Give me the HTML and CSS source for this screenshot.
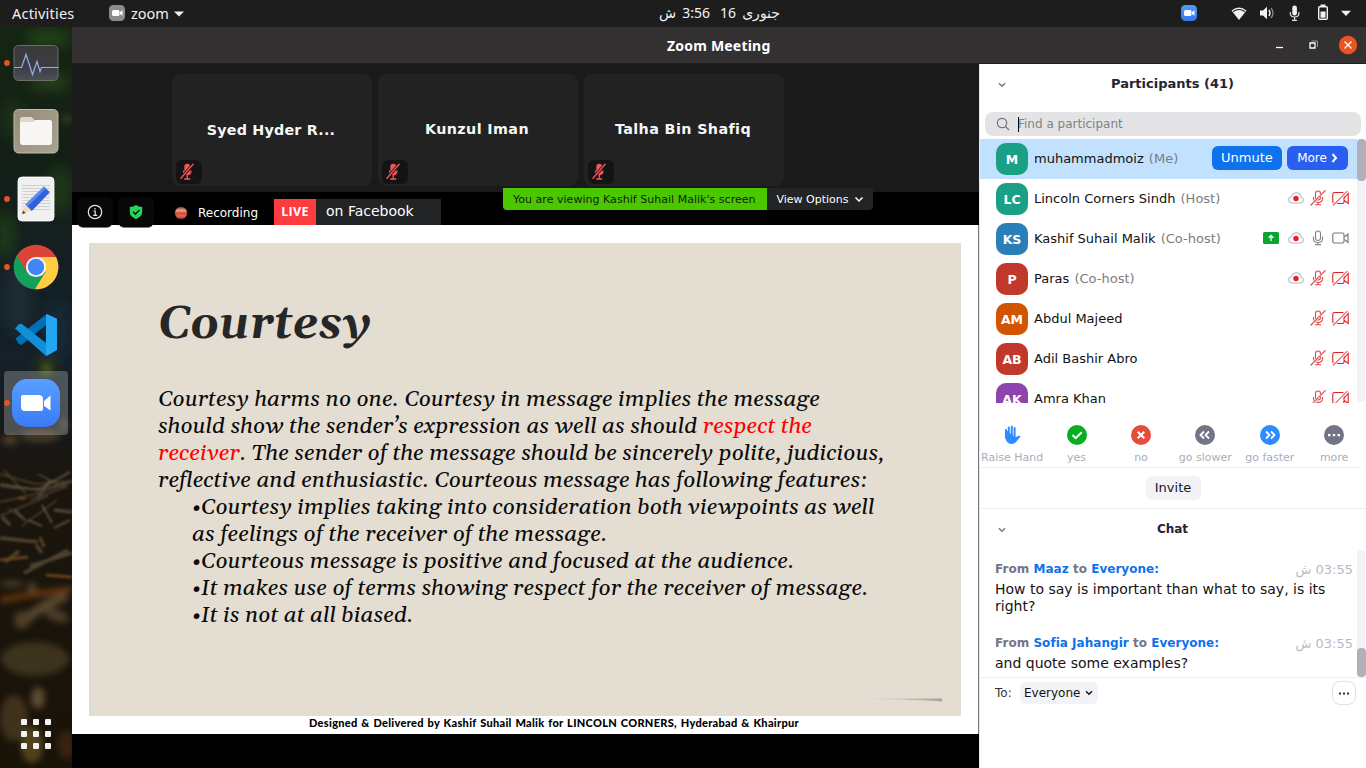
FILE: index.html
```html
<!DOCTYPE html>
<html lang="en">
<head>
<meta charset="utf-8">
<title>Zoom Meeting</title>
<link rel="stylesheet" href="styles.css">
</head>
<body>
<svg class="defs" width="0" height="0">
  <symbol id="mic-off" viewBox="0 0 16 16"><g fill="none" stroke="#e8474a" stroke-width="1.100"><rect x="5.500" y="1" width="5" height="9" rx="2.500"/><path d="M3.500 7v1.500c0 2.500 2 3.900 4.500 3.900s4.500-1.400 4.500-3.900V7M8 12.400v2.200M5 14.800h6"/><path d="M.5 15.500l15-15.200" stroke="#fff" stroke-width="1.800"/><path d="M.5 15.500l15-15.200"/></g></symbol>
  <symbol id="cam-off" viewBox="0 0 17 16"><g fill="none" stroke="#df2229" stroke-width="1.100"><path d="M9 13.500h1.500Q12 13.500 12 12V4Q12 2.500 10.500 2.500h-8Q.8 2.500.8 4v8q0 1.500 1.500 1.500M12.300 8l3.900-4.500v10l-3.900-3M4 13.500h6"/><path d="M1 15.500L15.500.8" stroke="#fff" stroke-width="3"/><path d="M1 15.500L15.500.8" stroke="#ee6064"/></g></symbol>
  <symbol id="mic-on" viewBox="0 0 16 16"><g fill="none" stroke="#858592" stroke-width="1.100"><rect x="5.500" y="1" width="5" height="9.500" rx="2.500"/><path d="M3.500 6.500V9c0 2.300 2 3.500 4.500 3.500s4.500-1.200 4.500-3.500V6.500M8 12.500v2M5 14.600h6"/></g></symbol>
  <symbol id="cam-on" viewBox="0 0 17 16"><g fill="none" stroke="#747487" stroke-width="1.100"><rect x=".8" y="3" width="11.200" height="10" rx="1.500"/><path d="M12.500 7l3.500-3v8.500l-3.500-3"/></g></symbol>
  <symbol id="cloud" viewBox="0 0 16 12"><path d="M4 11h8.500c3.500-.2 3.500-5 .6-5.800C12.500 2 10.500.9 8.300.9 5.700.9 4.200 2.400 3.700 4.600-.2 5.200-.2 10.700 4 11z" fill="#fff" stroke="#d0d0dc" stroke-width="1.700"/><circle cx="8" cy="6.500" r="2.700" fill="#df2026"/></symbol>
  <symbol id="tile-mic" viewBox="0 0 14 17"><g fill="none" stroke="#f65659" stroke-width="1.300"><rect x="5" y="1.500" width="4.500" height="9" rx="2.200" fill="#f65659"/><path d="M3.500 7.500c0 5.500 7.500 5.500 7.500 0M7.200 12v3.600M4.200 16h6"/><path d="M.5 15.800L13.500.8" stroke="#141414" stroke-width="3"/><path d="M.5 15.800L13.500.8"/></g></symbol>
  <symbol id="chev" viewBox="0 0 8 6"><path d="M1 1.200l3 3 3-3" fill="none" stroke="currentColor" stroke-width="1.400"/></symbol>
</svg>

<header class="topbar">
  <span class="activities">Activities</span>
  <svg class="app-ico" width="16" height="16" viewBox="0 0 16 16"><rect width="16" height="16" rx="4.500" fill="#8c8c8c"/><rect x="3" y="5" width="7.500" height="6" rx="1.500" fill="#fff"/><path d="M11 7l2.500-1.800v5.600L11 9z" fill="#fff"/></svg>
  <span class="app-name">zoom</span>
  <svg class="app-tri" width="10" height="6"><path d="M0 .5h10l-5 5z" fill="#f0f0f0"/></svg>
  <div class="clock" dir="rtl"><span>جنوری</span><span>16</span><span class="time">3:56</span><span>ش</span></div>
  <div class="tray">
    <svg width="185" height="26" viewBox="0 0 185 26">
      <defs><linearGradient id="zt" x2="0" y2="1"><stop stop-color="#4f9bff"/><stop offset="1" stop-color="#3478ee"/></linearGradient></defs>
      <rect y="5" width="16" height="16" rx="4.500" fill="url(#zt)"/><rect x="3" y="10" width="7.500" height="6" rx="1.500" fill="#fff"/><path d="M11 12l2.500-1.800v5.600L11 14z" fill="#fff"/>
      <path d="M50.500 10.500q7.500-6 15 0L58 20z" fill="#f2f2f2"/><path d="M52.200 11.500q5.800-4 11.600 0" fill="none" stroke="#1d1d1d" stroke-width="1.200"/>
      <path d="M79 10.500h3l4-3.800v12.600l-4-3.800h-3z" fill="#f2f2f2"/><path d="M88 10q2 3 0 6" fill="none" stroke="#f2f2f2" stroke-width="1.400"/><path d="M90 8q4 5 0 10" fill="none" stroke="#888" stroke-width="1.300"/>
      <rect x="111.300" y="5.500" width="4.600" height="10" rx="2.300" fill="#f2f2f2"/><path d="M109.300 12v1.500q0 3.500 4.300 3.500t4.300-3.500V12M113.600 17v3M111 20.300h5" fill="none" stroke="#e2e2e2" stroke-width="1.200"/>
      <path d="M139.500 5.300h5" stroke="#f2f2f2" stroke-width="1.600"/><rect x="137.700" y="6.700" width="8.600" height="12.600" rx="1" fill="none" stroke="#f2f2f2" stroke-width="1.400"/><rect x="139.500" y="11.500" width="5" height="6.200" fill="#f2f2f2"/>
      <path d="M160 10.800h10l-5 5.200z" fill="#f2f2f2"/>
    </svg>
  </div>
</header>

<div class="desktop">
  <nav class="dock">
    <svg width="72" height="741" viewBox="0 27 72 741">
      <defs>
        <linearGradient id="bg" x2="0" y2="1"><stop stop-color="#152513"/><stop offset=".18" stop-color="#131f17"/><stop offset=".3" stop-color="#151f22"/><stop offset=".45" stop-color="#14202a"/><stop offset=".54" stop-color="#17191a"/><stop offset=".6" stop-color="#1a160f"/><stop offset="1" stop-color="#191308"/></linearGradient>
        <filter id="b5" x="-50%" y="-50%" width="200%" height="200%"><feGaussianBlur stdDeviation="7"/></filter>
        <filter id="b2" x="-20%" y="-20%" width="140%" height="140%"><feGaussianBlur stdDeviation="3"/></filter>
        <filter id="b1"><feGaussianBlur stdDeviation=".8"/></filter>
        <linearGradient id="zb" x2="0" y2="1"><stop stop-color="#57a0ff"/><stop offset="1" stop-color="#3a7af6"/></linearGradient>
        <linearGradient id="mon" x2="0" y2="1"><stop stop-color="#39393b"/><stop offset=".6" stop-color="#3c3d42"/><stop offset="1" stop-color="#4d4f57"/></linearGradient>
        <linearGradient id="fl" x2="1" y2="1"><stop stop-color="#958c79"/><stop offset="1" stop-color="#aaa290"/></linearGradient>
      </defs>
      <rect y="27" width="72" height="741" fill="url(#bg)"/>
      <g filter="url(#b5)">
        <ellipse cx="48" cy="38" rx="22" ry="9" fill="#234419"/><ellipse cx="50" cy="82" rx="20" ry="7" fill="#2c4618"/><ellipse cx="14" cy="120" rx="12" ry="20" fill="#1b3318"/><ellipse cx="60" cy="190" rx="14" ry="24" fill="#1e3514"/><ellipse cx="5" cy="235" rx="10" ry="24" fill="#1c3a16"/><ellipse cx="18" cy="300" rx="14" ry="35" fill="#1b2c36"/><ellipse cx="58" cy="330" rx="12" ry="30" fill="#192a34"/><ellipse cx="45" cy="365" rx="8" ry="7" fill="#3a4410"/>
      </g>
      <g filter="url(#b2)" fill="#4b3e28">
        <circle cx="47" cy="369" r="5" fill="#4b5316"/><circle cx="67" cy="119" r="5" fill="#343824"/>
        <ellipse cx="40" cy="436" rx="20" ry="6" fill="#473b27"/><ellipse cx="10" cy="440" rx="8" ry="5"/><ellipse cx="64" cy="425" rx="5" ry="7" fill="#3a3326"/>
        <ellipse cx="35" cy="659" rx="34" ry="17" fill="#3d321f"/><ellipse cx="38" cy="698" rx="7" ry="11" fill="#5b4c30"/><ellipse cx="14" cy="718" rx="14" ry="23" fill="#40331b"/><ellipse cx="32" cy="745" rx="11" ry="18" fill="#51431f"/><ellipse cx="66" cy="745" rx="9" ry="14" fill="#39240e"/><ellipse cx="22" cy="620" rx="8" ry="9"/><ellipse cx="56" cy="615" rx="13" ry="6" transform="rotate(20 56 615)"/><ellipse cx="32" cy="588" rx="5" ry="6"/><path d="M0 600l30-5 42-6" stroke="#743b10" stroke-width="5"/><ellipse cx="12" cy="584" rx="12" ry="3"/><path d="M27 618q20-16 40-22" stroke="#594a2d" stroke-width="9" fill="none"/>
      </g>
      <g filter="url(#b1)" fill="none" stroke="#4e412e" stroke-width="2">
        <path d="M0 474l35 10 37-3M0 502l28-6 44-14M0 486q40 8 72-6M8 508l14 10M30 500l38-14M22 526l35-26M4 470l22 24M38 474l28 14M0 516l48-20" stroke-width="1.500"/>
        <path d="M24 573l44-23M30 566l42-13M0 538l38 4M5 562l14-11M36 545l6 8M50 480l-12 18M54 510l18 2M10 525l-8-8" stroke-width="3.500"/><path d="M0 560l28-3M46 575l26 2M18 498h8M40 537l4 10" stroke="#64411f" stroke-width="3"/>
        <path d="M42 505l10 18M28 520l14 6M14 509l12 12M70 520l-16 8M0 484l38 6 32-18" stroke="#665740" stroke-width="1.600"/>
      </g>
      <g fill="#e95420"><circle cx="7" cy="63" r="2.900"/><circle cx="7" cy="199" r="2.900"/><circle cx="7" cy="267" r="2.900"/></g>
      <rect x="14" y="45.500" width="44" height="35" rx="4.500" fill="url(#mon)" stroke="#6d6d6e"/>
      <path d="M14 67.500h7.500l4.500-13 6.500 20 4.500-13 3 10 1.500-4h17" fill="none" stroke="#91adee" stroke-width="1.200"/>
      <rect x="14" y="109.500" width="44" height="43.500" rx="4.500" fill="url(#fl)" stroke="#c2baab"/>
      <path d="M20 119.500q0-2.500 2.500-2.500h9l3 3H49q3 0 3 3v5H20z" fill="#ddd8ce"/><path d="M20 124q0-2 2-2h11l3-2h13.500q2.500 0 2.500 2.500V142q0 3-3 3H23q-3 0-3-3z" fill="#f8f7f6"/>
      <rect x="18" y="177" width="36" height="44" rx="4" fill="#f0f0f0" stroke="#fff" stroke-width=".8"/>
      <path d="M22 185.500h28M22 188.500h28M22 191.500h28M22 194.500h28M22 197.500h28M22 200.500h28M22 203.500h28M22 206.500h28M22 209.500h28" stroke="#d0d0d0"/>
      <path d="M25.500 204l6.500 6.500-10 3.500z" fill="#f7dcb8"/><path d="M22 214l1.200-3.500 2.600 2.500z" fill="#444"/><path d="M25.500 204.500L44 186.500l5.800 5.800L31.800 211z" fill="#2f62df"/><path d="M25.500 204.500L44 186.500l2 2L27.500 206.500z" fill="#5a8cf2"/>
      <circle cx="36" cy="267" r="22.300" fill="#db4437"/>
      <path d="M17 255.500A22.300 22.300 0 0 0 35 289.200L45.500 272 36 267 26.500 272z" fill="#12a05b"/>
      <path d="M36 257h20A22.300 22.300 0 0 1 35 289.300L45.500 272z" fill="#ffcd40"/><circle cx="36" cy="267" r="10.100" fill="#f5f5f5"/><circle cx="36" cy="267" r="8.200" fill="#4285f4"/>
      <path d="M15.500 338.500l3 5.200 3 1.300L46 325V314.500z" fill="#0070b8"/><path d="M15 328.500l4-4.500 2.500-.3L46 343v13z" fill="#118fd8"/><path d="M46 314.500q.5-.5 1.500-.3l9.500 4.600V350l-9.500 5.500q-1 .6-1.500 0z" fill="#24a7f2"/>
      <rect x="4" y="371" width="64" height="64" rx="4" fill="#fff" opacity=".24"/><circle cx="7" cy="403" r="2.900" fill="#e95420"/>
      <rect x="12" y="379" width="48" height="48" rx="15" fill="url(#zb)"/>
      <path d="M21 397q0-2 2-2h16q4 0 4 4v10q0 2-2 2H25q-4 0-4-4zM44 401l6.500-5.500v15L44 406z" fill="#fff"/>
      <g fill="#f2f2f0"><rect x="21" y="719" width="6" height="6" rx="1"/><rect x="33" y="719" width="6" height="6" rx="1"/><rect x="45" y="719" width="6" height="6" rx="1"/><rect x="21" y="731" width="6" height="6" rx="1"/><rect x="33" y="731" width="6" height="6" rx="1"/><rect x="45" y="731" width="6" height="6" rx="1"/><rect x="21" y="743" width="6" height="6" rx="1"/><rect x="33" y="743" width="6" height="6" rx="1"/><rect x="45" y="743" width="6" height="6" rx="1"/></g>
    </svg>
  </nav>

  <main class="window">
    <div class="titlebar"><span class="wtitle">Zoom Meeting</span>
      <svg class="wbtns" width="86" height="36" viewBox="0 0 86 36"><path d="M0 20.500h7" stroke="#fff" stroke-width="1.300"/><path d="M34 16h5v5h-5z" fill="none" stroke="#fff" stroke-width="1.300"/><path d="M35.500 14h6v6" fill="none" stroke="#999"/><circle cx="72" cy="18" r="9.200" fill="#e95420"/><path d="M68.500 14.500l7 7M75.500 14.500l-7 7" stroke="#fff" stroke-width="1.300"/></svg>
    </div>
    <div class="content">
      <section class="stage">
        <div class="gallery">
          <div class="tile"><span class="tname n1">Syed Hyder R...</span><span class="tmic"><svg width="14" height="17"><use href="#tile-mic"/></svg></span></div>
          <div class="tile"><span class="tname n2">Kunzul Iman</span><span class="tmic"><svg width="14" height="17"><use href="#tile-mic"/></svg></span></div>
          <div class="tile"><span class="tname n3">Talha Bin Shafiq</span><span class="tmic"><svg width="14" height="17"><use href="#tile-mic"/></svg></span></div>
        </div>
        <div class="viewing"><span class="vtext">You are viewing Kashif Suhail Malik's screen</span><span class="vopts">View Options <svg width="10" height="7" viewBox="0 0 10 7"><path d="M1.500 1.500L5 5l3.500-3.500" fill="none" stroke="#fff" stroke-width="1.500"/></svg></span></div>
        <div class="status">
          <span class="chip"><svg width="16" height="16" viewBox="0 0 16 16"><circle cx="8" cy="8" r="6.700" fill="none" stroke="#e8e8e8" stroke-width="1.200"/><path d="M6.500 7h1.700v4M6.200 11.300h4M8 4v1.600" fill="none" stroke="#e8e8e8" stroke-width="1.200"/></svg></span>
          <span class="chip"><svg width="14" height="16" viewBox="0 0 14 16"><path d="M7 1Q9.500 3 13.200 3v5c0 3.500-3 5.700-6.200 7C3.800 13.700.8 11.500.8 8V3Q4.500 3 7 1z" fill="#25d55a"/><path d="M4 7.800l2.300 2.300L10.500 6" fill="none" stroke="#071a0c" stroke-width="1.500"/></svg></span>
          <span class="recdot"></span><span class="rec">Recording</span>
          <span class="live">LIVE</span><span class="fb">on Facebook</span>
        </div>
        <div class="share">
          <article class="slide">
            <h1>Courtesy</h1>
            <div class="ln a1">Courtesy harms no one. Courtesy in message implies the message</div>
            <div class="ln a2">should show the sender’s expression as well as should <em>respect the</em></div>
            <div class="ln a3"><em>receiver</em>. The sender of the message should be sincerely polite, judicious,</div>
            <div class="ln a4">reflective and enthusiastic. Courteous message has following features:</div>
            <div class="ln in b1">•Courtesy implies taking into consideration both viewpoints as well</div>
            <div class="ln in b2">as feelings of the receiver of the message.</div>
            <div class="ln in b3">•Courteous message is positive and focused at the audience.</div>
            <div class="ln in b4">•It makes use of terms showing respect for the receiver of message.</div>
            <div class="ln in b5">•It is not at all biased.</div>
            <svg class="curl" width="78" height="6" viewBox="0 0 78 6"><defs><linearGradient id="cu"><stop stop-color="#aaa499" stop-opacity="0"/><stop offset="1" stop-color="#aaa499"/></linearGradient><filter id="cb"><feGaussianBlur stdDeviation=".6"/></filter></defs><path d="M0 1.500L77 1.500V4.500Q50 2.500 0 2z" fill="url(#cu)" filter="url(#cb)"/></svg>
          </article>
          <div class="credit">Designed &amp; Delivered by Kashif Suhail Malik for LINCOLN CORNERS, Hyderabad &amp; Khairpur</div>
        </div>
      </section>

      <aside class="panel">
        <div class="phead"><svg class="chev" width="8" height="6"><use href="#chev"/></svg><b>Participants (41)</b></div>
        <div class="search"><svg width="14" height="14" viewBox="0 0 14 14"><circle cx="6" cy="6" r="4.700" fill="none" stroke="#747487" stroke-width="1.200"/><path d="M9.500 9.500l3.500 3.500" stroke="#747487" stroke-width="1.200"/></svg><i class="caret"></i><span>Find a participant</span></div>
        <div class="list">
          <div class="row me"><span class="av teal">M</span><span class="nm">muhammadmoiz <i>(Me)</i></span><span class="btn un">Unmute</span><span class="btn mo">More <svg width="7" height="10" viewBox="0 0 7 10"><path d="M1.500 1L5 5 1.500 9" fill="none" stroke="#fff" stroke-width="2"/></svg></span></div>
          <div class="row"><span class="av teal">LC</span><span class="nm">Lincoln Corners Sindh <i>(Host)</i></span><svg width="16" height="12"><use href="#cloud"/></svg><svg width="16" height="16"><use href="#mic-off"/></svg><svg width="17" height="16"><use href="#cam-off"/></svg></div>
          <div class="row"><span class="av blue">KS</span><span class="nm">Kashif Suhail Malik <i>(Co-host)</i></span><svg class="shr" width="16" height="12" viewBox="0 0 16 12"><rect width="16" height="12" rx="1.500" fill="#0ba62f"/><path d="M8 9V4M5.700 5.800L8 3.500l2.300 2.300" fill="none" stroke="#fff" stroke-width="1.300"/></svg><svg width="16" height="12"><use href="#cloud"/></svg><svg width="16" height="16"><use href="#mic-on"/></svg><svg width="17" height="16"><use href="#cam-on"/></svg></div>
          <div class="row"><span class="av red">P</span><span class="nm">Paras <i>(Co-host)</i></span><svg width="16" height="12"><use href="#cloud"/></svg><svg width="16" height="16"><use href="#mic-off"/></svg><svg width="17" height="16"><use href="#cam-off"/></svg></div>
          <div class="row"><span class="av orange">AM</span><span class="nm">Abdul Majeed</span><svg width="16" height="16"><use href="#mic-off"/></svg><svg width="17" height="16"><use href="#cam-off"/></svg></div>
          <div class="row"><span class="av red">AB</span><span class="nm">Adil Bashir Abro</span><svg width="16" height="16"><use href="#mic-off"/></svg><svg width="17" height="16"><use href="#cam-off"/></svg></div>
          <div class="row"><span class="av purple">AK</span><span class="nm">Amra Khan</span><svg width="16" height="16"><use href="#mic-off"/></svg><svg width="17" height="16"><use href="#cam-off"/></svg></div>
          <div class="track"><div class="thumb"></div></div>
        </div>
        <div class="react">
          <div><svg width="20" height="20" viewBox="0 0 20 20"><path d="M3.500 4.500v8q.5 6.500 6 6.500 3 0 5-2.500l4-5q-1.500-1.700-3.500 0l-1.500 1" fill="#2d8cff"/><path d="M4 5v8M6.800 2.500V12M9.800 1.500V12M12.600 3v10" stroke="#2d8cff" stroke-width="2" stroke-linecap="round"/></svg>Raise Hand</div>
          <div><svg width="20" height="20"><circle cx="10" cy="10" r="10" fill="#07ae1d"/><path d="M5.500 10l3.200 3.200 6-6" fill="none" stroke="#fff" stroke-width="2"/></svg>yes</div>
          <div><svg width="20" height="20"><circle cx="10" cy="10" r="10" fill="#e64c3c"/><path d="M6.700 6.700l6.600 6.600M13.300 6.700l-6.600 6.600" stroke="#fff" stroke-width="2"/></svg>no</div>
          <div><svg width="20" height="20"><circle cx="10" cy="10" r="10" fill="#747487"/><path d="M9 6.500L5.500 10 9 13.500M14 6.500L10.500 10l3.500 3.500" fill="none" stroke="#fff" stroke-width="1.800"/></svg>go slower</div>
          <div><svg width="20" height="20"><circle cx="10" cy="10" r="10" fill="#2d8cff"/><path d="M6 6.500L9.500 10 6 13.500M11 6.500l3.500 3.500-3.500 3.500" fill="none" stroke="#fff" stroke-width="1.800"/></svg>go faster</div>
          <div><svg width="20" height="20"><circle cx="10" cy="10" r="10" fill="#747487"/><path d="M4 9h2.500v2.200H4zM8.800 9h2.400v2.200H8.800zM13.500 9H16v2.200h-2.500z" fill="#fff"/></svg>more</div>
        </div>
        <div class="invite"><span>Invite</span></div>
        <div class="phead chat-h"><svg class="chev" width="8" height="6"><use href="#chev"/></svg><b class="ct">Chat</b></div>
        <div class="chat">
          <div class="msg"><div class="from"><b>From <em>Maaz</em> to <em>Everyone:</em></b><span dir="rtl">03:55 ش</span></div><p>How to say is important than what to say, is its<br>right?</p></div>
          <div class="msg"><div class="from"><b>From <em>Sofia Jahangir</em> to <em>Everyone:</em></b><span dir="rtl">03:55 ش</span></div><p>and quote some examples?</p></div>
          <div class="track"><div class="thumb low"></div></div>
        </div>
        <div class="to"><span class="tl">To:</span><span class="ev">Everyone <svg width="8" height="6"><use href="#chev"/></svg></span><span class="dots"><svg width="12" height="3"><path d="M1 .5h2v2H1zM5 .5h2v2H5zM9 .5h2v2H9z" fill="#333"/></svg></span></div>
      </aside>
    </div>
  </main>
</div>
</body>
</html>
```
FILE: styles.css
```css
* { box-sizing: border-box; }
body { margin: 0; width: 1366px; height: 768px; overflow: hidden; background: #000; font-family: "DejaVu Sans", sans-serif; font-size: 13px; display: flex; flex-direction: column; }
svg { display: block; flex: none; }
i, em { font-style: normal; }
.defs { position: absolute; }
.topbar { height: 27px; flex: none; background: #1d1d1d; color: #f2f2f2; display: flex; align-items: center; font: 14.5px "Noto Sans", sans-serif; padding: 0 0 2px 12px; white-space: nowrap; }
.activities { width: 97px; letter-spacing: .2px; }
.app-name { width: 43px; margin-left: 6px; }
.app-ico { margin-bottom: -1px; }
.app-tri { margin-top: 2px; }
.clock { width: 121px; margin-left: 475px; display: flex; justify-content: space-between; font-family: "Noto Sans", "DejaVu Sans", sans-serif; font-size: 14px; }
.clock .time { margin-right: 4px; }
.tray { margin: 1px 0 0 auto; }
.desktop { display: flex; height: 741px; }
.dock { width: 72px; flex: none; }
.window { width: 1294px; display: flex; flex-direction: column; }
.titlebar { height: 37px; flex: none; background: #333031; border-bottom: 1px solid #1f1d1e; display: flex; justify-content: flex-end; color: #fff; font: bold 14px/38px "Noto Sans", sans-serif; }
.wtitle { width: 104px; margin-right: 505px; white-space: nowrap; letter-spacing: .2px; }
.wbtns { margin-right: 4px; }
.content { display: flex; height: 704px; }
.stage { width: 907px; flex: none; position: relative; background: #000; }
.gallery { height: 128px; background: #1a1a1a; padding: 10px 0 0 100px; display: flex; gap: 6px; }
.tile { width: 200px; height: 112px; border-radius: 8px; background: #222; color: #f6f6f6; display: flex; justify-content: center; align-items: center; position: relative; }
.tname { font-weight: bold; font-size: 14.300px; letter-spacing: .4px; white-space: nowrap; padding: 0 2px 2px 0; }
.n1 { padding-bottom: 1px; letter-spacing: .2px; }
.tmic { position: absolute; left: 4px; bottom: 2px; width: 26px; height: 24px; border-radius: 6px; background: #141414; padding: 3px 0 0 4px; }
.viewing { position: absolute; left: 431px; top: 124px; width: 370px; height: 22px; display: flex; border-radius: 0 0 4px 4px; overflow: hidden; font-size: 11px; line-height: 23px; white-space: nowrap; }
.vtext { width: 264px; background: #4bc700; color: #10230a; padding-left: 10px; letter-spacing: .03px; }
.vopts { flex: 1; background: #222426; color: #fff; display: flex; align-items: center; justify-content: center; gap: 5px; }
.status { height: 33px; display: flex; align-items: flex-start; color: #fff; padding-left: 5px; }
.chip { width: 36px; height: 30px; margin: 5px 5px 0 0; border-radius: 6px; background: #070909; box-shadow: 0 2px 0 -1px #777; display: flex; align-items: center; justify-content: center; z-index: 1; }
.recdot { width: 12px; height: 12px; margin: 15px 0 0 16px; border-radius: 50%; background: linear-gradient(#a64237 0, #e8a79c 32%, #d8442f 50%, #df6a5a 75%, #8c3a34 100%); box-shadow: 0 0 1px #a55; }
.rec { margin: 13px 0 0 11px; width: 76px; font-size: 12px; line-height: 16px; }
.live { margin-top: 7px; width: 42px; height: 26px; background: #fd3c40; font: bold 12.500px/26px "Open Sans", sans-serif; text-align: center; letter-spacing: .3px; }
.fb { margin-top: 7px; width: 125px; height: 26px; background: #222426; font-size: 14px; line-height: 25px; padding-left: 10px; white-space: nowrap; }
.share { height: 509px; background: #fff; padding: 18px 17px 0; border-right: 1px solid #777; width: 907px; }
.slide { width: 872px; height: 473px; background: #e4ddd2; box-shadow: inset 4px 0 0 #e0ddd3; padding: 51px 0 0 69px; position: relative; font-family: Georgia, Gelasio, "Liberation Serif", serif; font-style: italic; }
h1 { margin: 0 0 30px; font-size: 45.200px; line-height: 62px; height: 62px; color: #262626; }
.slide .ln { font-size: 22.600px; line-height: 27px; height: 27px; color: #0a0a0a; white-space: nowrap; text-align: justify; text-align-last: justify; }
.slide em { color: #f00; font-style: italic; }
.in { margin-left: 34px; }
.a1 { width: 662px; } .a2 { width: 654px; } .a3 { width: 726px; } .a4 { width: 709px; }
.b1 { width: 682px; } .b2 { width: 415px; } .b3 { width: 601px; } .b4 { width: 676px; } .b5 { width: 221px; }
.curl { position: absolute; right: 18px; bottom: 13px; }
.credit { width: 490px; margin-left: 220px; height: 15px; font: 900 11px/14px Lato, sans-serif; letter-spacing: .3px; color: #000; text-align-last: justify; white-space: nowrap; }
.panel { width: 387px; background: #fff; border-left: 1px solid #e8e8ee; }
.phead { height: 39px; position: relative; display: flex; align-items: center; justify-content: center; color: #232333; padding-right: 1px; }
.chev { position: absolute; left: 18px; top: 18px; color: #747487; }
.search { margin: 9px 5px 3px; height: 24px; border-radius: 8px; background: #e4e4e6; display: flex; align-items: center; padding-left: 11px; color: #828282; font-size: 12px; }
.caret { width: 1px; height: 15px; background: #000; margin: 0 -1px 0 8px; }
.list { height: 264px; overflow: hidden; position: relative; }
.row { height: 40px; width: 377px; padding: 0 8px 0 16px; display: flex; align-items: center; gap: 6px; }
.row > svg { margin-top: -2px; }
.me { background: #c2e1ff; }
.av { width: 32px; height: 32px; border-radius: 10px; color: #fff; font-weight: bold; font-size: 12.500px; display: flex; align-items: center; justify-content: center; }
.teal { background: #1aa085; } .blue { background: #2a7fb8; } .red { background: #c0392b; } .orange { background: #d35400; } .purple { background: #8e44ad; }
.nm { flex: 1; color: #111; white-space: nowrap; padding-bottom: 2px; }
.nm i { color: #7c7c80; margin-left: 1px; }
.row .shr { margin-right: 3px; }
.btn { height: 24px; border-radius: 6px; color: #fff; display: flex; align-items: center; justify-content: center; font-size: 12px; margin-bottom: 2px; }
.un { width: 70px; background: #0e72ed; font-size: 13px; padding-bottom: 1px; }
.mo { width: 61px; background: #285ff0; gap: 4px; margin: 0 1px 2px -1px; }
.track { position: absolute; top: 0; right: 1px; width: 8px; height: 263px; border-radius: 4px; background: #f1f1f6; }
.thumb { width: 9px; height: 42px; border-radius: 4px; background: #b0b0b8; }
.react { height: 65px; margin: 0 5px 0 0; padding: 22px 0 0; border-bottom: 1px solid #ededf2; display: flex; color: #acacbc; font-size: 11px; }
.react div { width: 64.400px; flex: none; display: flex; flex-direction: column; align-items: center; gap: 6px; line-height: 13px; white-space: nowrap; }
.invite { height: 41px; border-bottom: 1px solid #ededf2; display: flex; justify-content: center; padding-top: 8px; }
.invite span { width: 55px; height: 24px; border-radius: 6px; background: #f2f2f7; line-height: 23px; text-align: center; color: #131619; }
.chat-h { height: 41px; padding-bottom: 2px; }
.ct { font-size: 12px; }
.chat { height: 128px; position: relative; padding: 12px 13px 0 15px; border-bottom: 1px solid #ededf2; }
.chat .track { height: 127px; }
.low { margin-top: 98px; height: 29px; }
.msg { height: 74px; }
.from { display: flex; justify-content: space-between; font-size: 12px; line-height: 15px; color: #747487; letter-spacing: .03px; }
.from em { color: #0e72ed; }
.from span { font-size: 13px; color: #b9b9bd; letter-spacing: 0; }
.msg p { margin: 4px 0 0; line-height: 17px; color: #131313; white-space: nowrap; font-size: 14px; }
.to { display: flex; align-items: center; padding: 3px 10px 0 15px; font-size: 12px; color: #333; }
.ev { margin-left: 8px; width: 78px; height: 22px; border-radius: 6px; background: #f2f2f7; display: flex; align-items: center; justify-content: center; gap: 5px; color: #131313; }
.dots { margin-left: auto; width: 24px; height: 24px; border: 1px solid #dedee8; border-radius: 8px; display: flex; align-items: center; justify-content: center; }
```
